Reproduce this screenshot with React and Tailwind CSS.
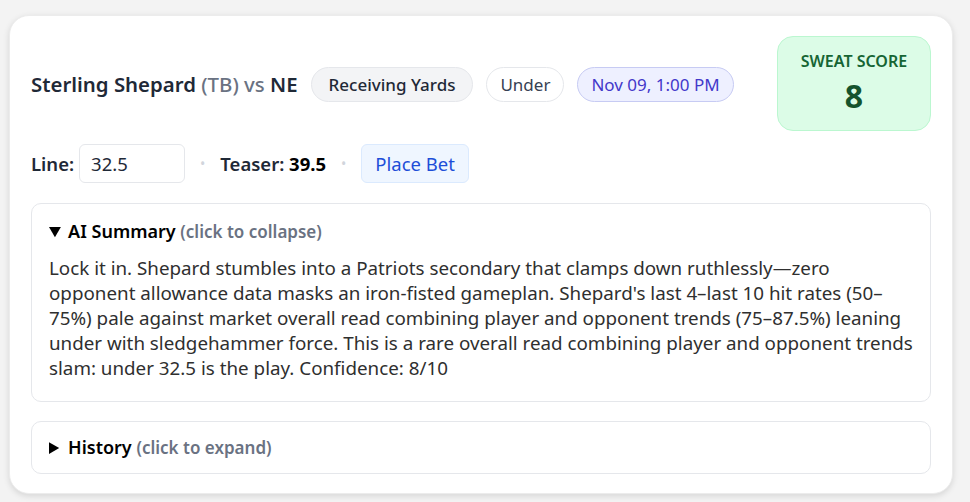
import React from "react";

const Dot = () => <span className="text-gray-300 text-[14px]">•</span>;

const App = () => {
  return (
    <div className="min-h-screen bg-[#f3f3f3] pt-[15px] pl-[9px] pr-[17px] font-['Noto_Sans',sans-serif] text-[#1f2937]">
      <div className="bg-white rounded-[20px] shadow-[0_2px_6px_rgba(0,0,0,0.12)] border border-[#ececec] px-[21px] pt-[20px] pb-[19px]">
        {/* header */}
        <div className="flex items-start justify-between">
          <div className="flex items-center gap-[13px] mt-[31px]">
            <h2 className="text-[20.4px] font-semibold text-[#1f2937]">
              Sterling Shepard <span className="text-gray-500 font-medium">(TB)</span>{" "}
              <span className="text-gray-500 font-medium">vs</span> NE
            </h2>
            <span className="px-[17px] py-[3.5px] rounded-full bg-gray-100 border border-gray-200 text-[17px] font-medium">
              Receiving Yards
            </span>
            <span className="px-[13px] py-[3.5px] rounded-full bg-white border border-gray-200 text-[17px] text-gray-700">
              Under
            </span>
            <span className="px-[13px] py-[3.5px] rounded-full bg-[#eef0ff] border border-[#c7cbf3] text-[17px] text-[#4338ca]">
              Nov 09, 1:00 PM
            </span>
          </div>
          <div className="w-[154px] h-[95px] rounded-[16px] bg-[#dcfce7] border border-[#bbf7d0] flex flex-col items-center pt-[12px]">
            <div className="text-[16px] font-semibold text-[#166534]">SWEAT SCORE</div>
            <div className="text-[32px] font-bold text-[#14532d] leading-none mt-[7px]">8</div>
          </div>
        </div>

        {/* line row */}
        <div className="flex items-center gap-[15px] mt-[13px]">
          <span className="text-[18.5px] font-semibold">Line:</span>
          <input
            defaultValue="32.5"
            className="-ml-[10px] w-[106px] h-[39px] px-[11px] border border-gray-200 rounded-[6px] text-[18.5px] outline-none"
          />
          <Dot />
          <span className="text-[18.5px] font-semibold">
            Teaser: <span className="font-bold text-black">39.5</span>
          </span>
          <Dot />
          <button className="h-[39px] px-[13px] rounded-[6px] bg-[#eff6ff] border border-[#dbeafe] text-[#1d4ed8] text-[18.5px]">
            Place Bet
          </button>
        </div>

        {/* AI summary */}
        <details open className="mt-[20px] border border-gray-200 rounded-[10px] px-[17px] pt-[14px] pb-[20px]">
          <summary className="cursor-pointer text-[18px] font-semibold text-black">
            AI Summary <span className="text-[17px] text-gray-500">(click to collapse)</span>
          </summary>
          <p className="mt-[11px] text-[18.8px] leading-[25px] text-[#2f2f2f]">
            Lock it in. Shepard stumbles into a Patriots secondary that clamps down ruthlessly—zero opponent
            allowance data masks an iron-fisted gameplan. Shepard's last 4–last 10 hit rates (50–75%) pale
            against market overall read combining player and opponent trends (75–87.5%) leaning under with
            sledgehammer force. This is a rare overall read combining player and opponent trends slam: under
            32.5 is the play. Confidence: 8/10
          </p>
        </details>

        {/* history */}
        <details className="mt-[19px] border border-gray-200 rounded-[10px] px-[17px] py-[12px]">
          <summary className="cursor-pointer text-[18px] font-semibold text-black">
            History <span className="text-[17px] text-gray-500">(click to expand)</span>
          </summary>
        </details>
      </div>
    </div>
  );
};

export default App;
